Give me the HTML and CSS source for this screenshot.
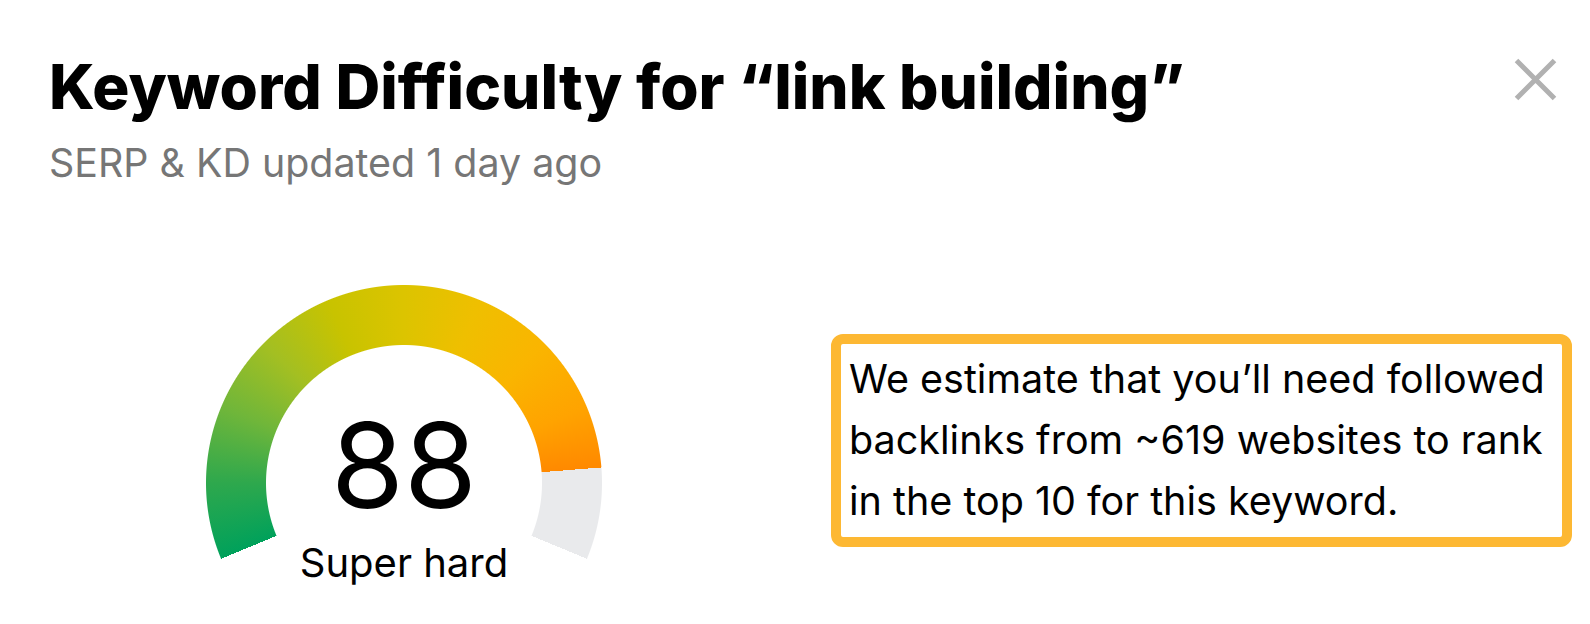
FILE: index.html
```html
<!DOCTYPE html>
<html lang="en">
<head>
<meta charset="utf-8">
<title>Keyword Difficulty</title>
<link rel="stylesheet" href="styles.css">
</head>
<body>
<div class="panel">
  <header class="header">
    <div class="heading">
      <h1 class="title">Keyword Difficulty for “link building”</h1>
      <p class="subtitle">SERP &amp; KD updated 1 day ago</p>
    </div>
    <button class="close" aria-label="Close">
      <svg width="43" height="43" viewBox="0 0 43 43"><path d="M2.5 2.5 L40.5 40.5 M40.5 2.5 L2.5 40.5" stroke="#b1b1b1" stroke-width="5" fill="none"/></svg>
    </button>
  </header>
  <section class="content">
    <div class="gauge">
      <div class="ring"></div>
      <div class="gauge-text">
        <span class="score">88</span>
        <span class="label">Super hard</span>
      </div>
    </div>
    <div class="estimate">
      We estimate that you’ll need followed<br>backlinks from ~619 websites to rank<br>in the top 10 for this keyword.
    </div>
  </section>
</div>
</body>
</html>
```

FILE: styles.css
```css
html, body {
  margin: 0;
  padding: 0;
  background: #ffffff;
}
body {
  font-family: Inter, "Noto Sans", "Liberation Sans", sans-serif;
  color: #000;
  overflow: hidden;
}
.panel {
  padding: 50px 18px 0 49px;
}
.header {
  display: flex;
  justify-content: space-between;
  align-items: flex-start;
  padding-right: 15px;
}
.title {
  margin: 0;
  font-family: Inter, "Liberation Sans", sans-serif;
  font-weight: 800;
  font-size: 62px;
  line-height: 74px;
  letter-spacing: 0;
  color: #000;
}
.subtitle {
  margin: 15px 0 0;
  font-size: 39.4px;
  line-height: 48px;
  color: #767676;
}
.close {
  margin-top: 8px;
  padding: 0;
  border: 0;
  background: none;
  width: 43px;
  height: 43px;
  display: block;
}
.close svg { display: block; }
.content {
  display: flex;
  align-items: flex-start;
  margin-top: 98px;
  padding-left: 157px;
  gap: 229px;
}
.gauge {
  width: 396px;
  height: 301px;
  display: grid;
  grid-template-columns: 396px;
  grid-template-rows: 301px;
  overflow: hidden;
  flex: none;
}
.ring {
  grid-area: 1 / 1;
  width: 396px;
  height: 396px;
  background: conic-gradient(from 247.5deg at 50% 50%,
    #00a15b 0deg,
    #2ea84d 22.5deg,
    #6fb63a 45deg,
    #a3bf22 67.5deg,
    #c8c300 90deg,
    #dcc400 112.5deg,
    #efbf00 135deg,
    #fab500 157.5deg,
    #ffa300 180deg,
    #ff8900 198deg,
    #e9eaec 198deg,
    #e9eaec 225deg,
    rgba(255,255,255,0) 225deg);
  -webkit-mask: radial-gradient(circle at 50% 50%, transparent 137.5px, #000 138.5px, #000 197.5px, transparent 198.5px);
  mask: radial-gradient(circle at 50% 50%, transparent 137.5px, #000 138.5px, #000 197.5px, transparent 198.5px);
}
.gauge-text {
  grid-area: 1 / 1;
  display: flex;
  flex-direction: column;
  align-items: center;
  padding-top: 121px;
}
.score {
  font-size: 118px;
  line-height: 118px;
  font-weight: 400;
  color: #000;
}
.label {
  margin-top: 14.5px;
  font-size: 40px;
  line-height: 48px;
  color: #000;
}
.estimate {
  margin-top: 49px;
  box-sizing: border-box;
  width: 741px;
  border: 10px solid #fdb833;
  border-radius: 12px;
  padding: 5px 8px;
  font-size: 39.5px;
  line-height: 61px;
  color: #000;
  white-space: nowrap;
  flex: none;
}
```
